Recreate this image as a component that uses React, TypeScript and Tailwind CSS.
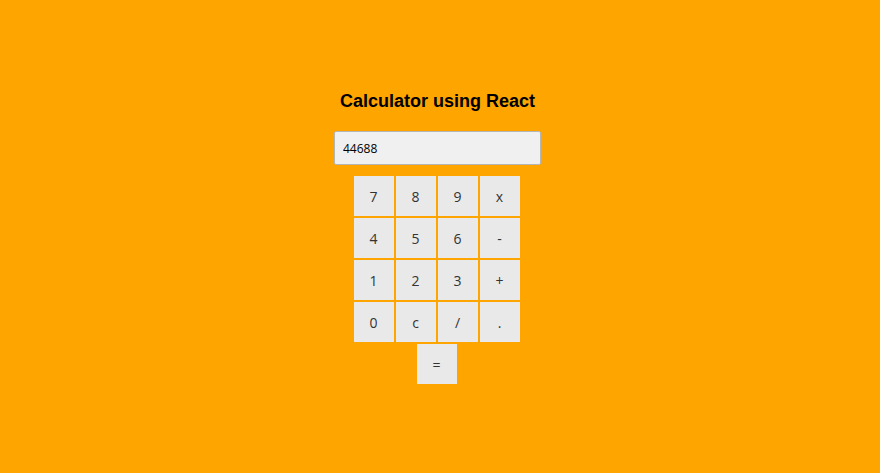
import React from "react";

const rows = [
  ["7", "8", "9", "x"],
  ["4", "5", "6", "-"],
  ["1", "2", "3", "+"],
  ["0", "c", "/", "."],
];

function Key({ label }: { label: string }) {
  return (
    <button className="w-[40px] h-[40px] bg-[#e9e9e9] text-[#333] text-[14px] flex items-center justify-center [font-family:'Open_Sans',sans-serif]">
      {label}
    </button>
  );
}

export default function App() {
  return (
    <div className="min-h-screen w-full bg-[#ffa500] flex flex-col items-center pr-[5px] pt-[91px]">
      <h1 className="text-[18px] leading-[21px] font-bold text-black [font-family:'Liberation_Sans',Arial,sans-serif]">
        Calculator using React
      </h1>
      <input
        readOnly
        value="44688"
        className="mt-[19px] w-[207px] h-[34px] border border-[#b5b5b5] rounded-[2px] bg-[#f0f0f0] px-[8px] text-[12px] text-black outline-none [font-family:'Open_Sans',sans-serif]"
      />
      <div className="mt-[11px] mr-[2px] flex flex-col items-center gap-[2px]">
        {rows.map((r, i) => (
          <div key={i} className="flex gap-[2px]">
            {r.map((k) => (
              <Key key={k} label={k} />
            ))}
          </div>
        ))}
        <div className="flex">
          <Key label="=" />
        </div>
      </div>
    </div>
  );
}
